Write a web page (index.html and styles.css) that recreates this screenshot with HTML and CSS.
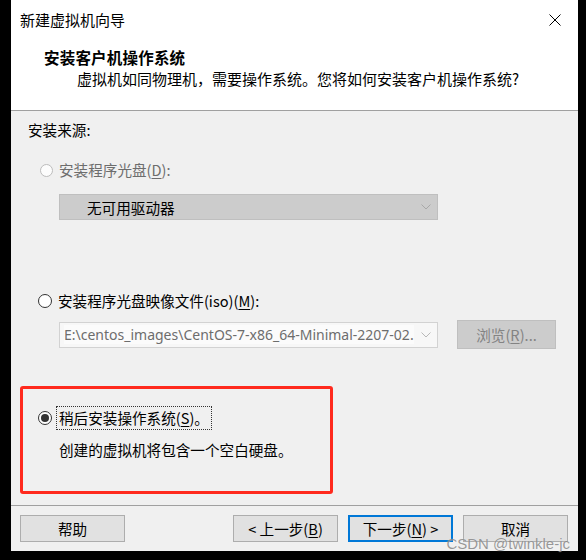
FILE: index.html
```html
<!DOCTYPE html>
<html lang="zh-CN">
<head>
<meta charset="utf-8">
<title>新建虚拟机向导</title>
<link rel="stylesheet" href="styles.css">
</head>
<body>
<div class="window">
  <div class="header">
    <div class="titlebar">
      <span class="title">新建虚拟机向导</span>
      <svg class="close" width="12" height="12" viewBox="0 0 12 12"><path d="M0.5 0.5 L11.5 11.5 M11.5 0.5 L0.5 11.5" stroke="#000" stroke-width="1" fill="none"/></svg>
    </div>
    <div class="heading">安装客户机操作系统</div>
    <div class="subtitle">虚拟机如同物理机，需要操作系统。您将如何安装客户机操作系统?</div>
  </div>

  <div class="content">
    <div class="group-label">安装来源:</div>

    <div class="option option-disabled">
      <span class="radio"></span>
      <span>安装程序光盘(<u>D</u>):</span>
    </div>
    <div class="combo combo-disabled">
      <span class="combo-text">无可用驱动器</span>
      <svg class="chev" width="10" height="6" viewBox="0 0 10 6"><path d="M0.5 0.5 L5 5 L9.5 0.5" stroke="#a8a8a8" fill="none"/></svg>
    </div>

    <div class="option option-iso">
      <span class="radio"></span>
      <span>安装程序光盘映像文件(iso)(<u>M</u>):</span>
    </div>
    <div class="file-row">
      <div class="combo combo-file">
        <span class="combo-text file-text">E:\centos_images\CentOS-7-x86_64-Minimal-2207-02.</span>
        <svg class="chev" width="10" height="6" viewBox="0 0 10 6"><path d="M0.5 0.5 L5 5 L9.5 0.5" stroke="#b8b8b8" fill="none"/></svg>
      </div>
      <div class="btn btn-disabled">浏览(<u>R</u>)...</div>
    </div>

    <div class="option option-later">
      <span class="radio radio-checked"></span>
      <span class="focus">稍后安装操作系统(<u>S</u>)。</span>
    </div>
    <div class="desc">创建的虚拟机将包含一个空白硬盘。</div>

    <div class="highlight"></div>
  </div>

  <div class="footer">
    <div class="btn">帮助</div>
    <div class="btn btn-back">&lt; 上一步(<u>B</u>)</div>
    <div class="btn btn-default">下一步(<u>N</u>) &gt;</div>
    <div class="btn">取消</div>
  </div>

  <div class="watermark">CSDN @twinkle-jc</div>
</div>
</body>
</html>
```

FILE: styles.css
```css
html, body {
  margin: 0;
  padding: 0;
  background: #000;
  width: 586px;
  height: 560px;
  overflow: hidden;
}

.window {
  position: relative;
  margin-left: 11px;
  width: 567px;
  height: 551px;
  display: flex;
  flex-direction: column;
  background: #f0f0f0;
  font-family: "Noto Sans CJK SC", "Noto Sans", sans-serif;
  font-size: 14.6px;
  color: #000;
}

.header {
  background: #fff;
  height: 110px;
  border-bottom: 1px solid #a0a0a0;
  flex: none;
}

.titlebar {
  height: 40px;
  display: flex;
  align-items: center;
  justify-content: space-between;
  padding-left: 9px;
  padding-right: 17px;
}

.title {
  font-size: 15px;
  line-height: 20px;
}

.close {
  display: block;
}

.heading {
  margin-top: 7px;
  padding-left: 33px;
  font-weight: bold;
  font-size: 15.5px;
  letter-spacing: 0.2px;
  line-height: 20px;
}

.subtitle {
  margin-top: 2px;
  padding-left: 66px;
  font-size: 15px;
  line-height: 20px;
}

.content {
  position: relative;
  flex: 1;
  padding-top: 9px;
  padding-left: 17px;
}

.group-label {
  line-height: 20px;
}

.option {
  display: flex;
  align-items: center;
  gap: 6px;
  line-height: 20px;
  padding-left: 12px;
}

.option-disabled {
  margin-top: 20px;
  color: #6d6d6d;
}

.option-iso {
  margin-top: 71px;
  padding-left: 10px;
}

.option-later {
  margin-top: 59px;
  padding-left: 10px;
}

.radio {
  width: 14px;
  height: 14px;
  box-sizing: border-box;
  border: 1px solid #333;
  border-radius: 50%;
  background: #fff;
  display: flex;
  align-items: center;
  justify-content: center;
  flex: none;
}

.option-disabled .radio {
  width: 13px;
  height: 13px;
  border-color: #bcbcbc;
  background: #fcfcfc;
}

.radio-checked::after {
  content: "";
  width: 8px;
  height: 8px;
  border-radius: 50%;
  background: #333;
}

.focus {
  outline: 1px dotted #333;
  outline-offset: 1px;
  padding: 0 1px;
}

.combo {
  box-sizing: border-box;
  width: 379px;
  height: 26px;
  display: flex;
  align-items: center;
  justify-content: space-between;
  border: 1px solid #bfbfbf;
  padding-right: 6px;
}

.combo-disabled {
  margin-top: 14px;
  margin-left: 31px;
  background: #cccccc;
  padding-left: 27px;
}

.combo-text {
  white-space: nowrap;
}

.file-row {
  margin-top: 9px;
  margin-left: 31px;
  display: flex;
  align-items: center;
  gap: 19px;
}

.combo-file {
  background: #f7f7f7;
  border-color: #d2d2d2;
  padding-left: 4px;
  color: #6d6d6d;
}

.file-text {
  font-family: "Noto Sans", "Open Sans", sans-serif;
  font-size: 14px;
  background: #fbfbfb;
}

.chev {
  flex: none;
  display: block;
}

.desc {
  margin-top: 12px;
  padding-left: 31px;
  line-height: 20px;
}

.btn {
  box-sizing: border-box;
  width: 105px;
  height: 27px;
  display: flex;
  align-items: center;
  justify-content: center;
  background: #e1e1e1;
  border: 1px solid #adadad;
  line-height: 20px;
  flex: none;
}

.btn-disabled {
  width: 99px;
  height: 29px;
  background: #cccccc;
  border-color: #bfbfbf;
  color: #838383;
}

.highlight {
  position: absolute;
  left: 9px;
  top: 275px;
  width: 313px;
  height: 108px;
  box-sizing: border-box;
  border: 3px solid #ff2a1e;
  border-radius: 3px;
}

.footer {
  flex: none;
  border-top: 1px solid #a0a0a0;
  height: 46px;
  box-sizing: border-box;
  padding: 9px 10px 0 9px;
  display: flex;
  gap: 10px;
}

.btn-back {
  margin-left: auto;
}

.btn-default {
  border: 2px solid #0078d7;
}

.watermark {
  position: absolute;
  right: 8px;
  bottom: -1px;
  font-family: "Liberation Sans", Arial, sans-serif;
  font-size: 15px;
  color: rgba(120, 120, 120, 0.75);
  text-shadow: 0 0 1px rgba(255, 255, 255, 0.6);
  line-height: 16px;
}

u {
  text-decoration: underline;
  text-underline-offset: 2px;
}
```
